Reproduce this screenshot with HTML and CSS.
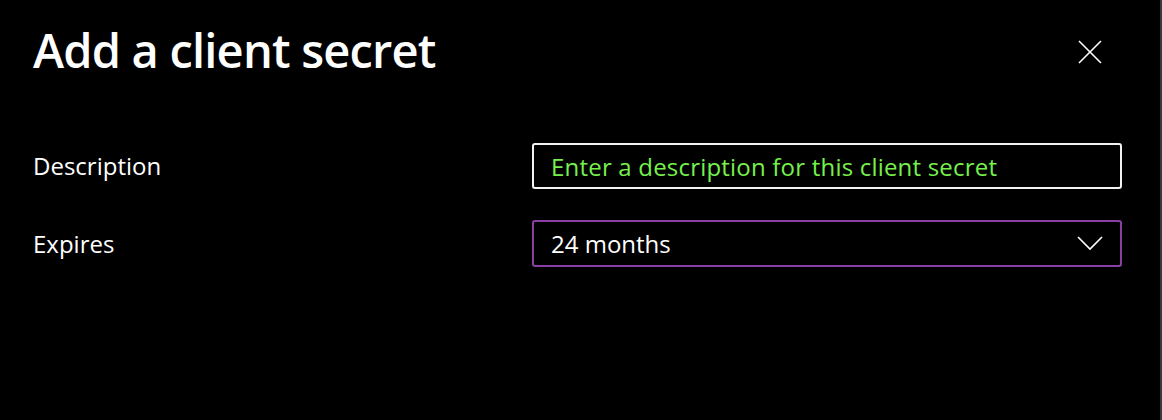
FILE: index.html
```html
<!DOCTYPE html>
<html lang="en">
<head>
<meta charset="utf-8">
<title>Add a client secret</title>
<link rel="stylesheet" href="styles.css">
</head>
<body>
<div class="panel">
  <header class="header">
    <h1 class="title">Add a client secret</h1>
    <button class="close" aria-label="Close">
      <svg width="24" height="24" viewBox="0 0 24 24"><path d="M1 1 L23 23 M23 1 L1 23" stroke="#fff" stroke-width="1.6" fill="none"/></svg>
    </button>
  </header>
  <div class="form">
    <label class="label" for="desc">Description</label>
    <div class="field input-field"><span class="placeholder">Enter a description for this client secret</span></div>
    <label class="label">Expires</label>
    <div class="field select-field">
      <span class="value">24 months</span>
      <svg class="chevron" width="26" height="15" viewBox="0 0 26 15"><path d="M1 1 L13 13 L25 1" stroke="#fff" stroke-width="1.6" fill="none"/></svg>
    </div>
  </div>
</div>
</body>
</html>
```
FILE: styles.css
```css
html, body {
  margin: 0;
  padding: 0;
  background: #000;
}
body {
  font-family: "Open Sans", "Noto Sans", sans-serif;
  color: #fff;
}
.panel {
  width: 1162px;
  height: 420px;
  box-sizing: border-box;
  border-right: 2px solid #3a3a3a;
  padding: 0 58px 0 33px;
}
.header {
  display: flex;
  justify-content: space-between;
  align-items: flex-start;
  padding-top: 20px;
  height: 123px;
  box-sizing: border-box;
}
.title {
  margin: 0;
  font-size: 47px;
  font-weight: 600;
  line-height: 60px;
  letter-spacing: -0.8px;
}
.close {
  background: none;
  border: 0;
  padding: 0;
  margin-top: 20px;
  width: 24px;
  height: 24px;
  display: block;
}
.close svg { display: block; }
.form {
  display: grid;
  grid-template-columns: 499px 590px;
  row-gap: 31px;
  align-items: center;
  padding-top: 20px;
}
.label {
  font-size: 24px;
  line-height: 30px;
}
.field {
  box-sizing: border-box;
  height: 46px;
  border-radius: 3px;
  display: flex;
  align-items: center;
  padding: 0 17px 0 17px;
  font-size: 24px;
}
.input-field {
  border: 2px solid #f2f2f2;
}
.placeholder {
  color: #76f04c;
  letter-spacing: 0.2px;
}
.select-field {
  height: 47px;
  border: 2px solid #8a3fa3;
  justify-content: space-between;
}
.chevron { display: block; }
```
